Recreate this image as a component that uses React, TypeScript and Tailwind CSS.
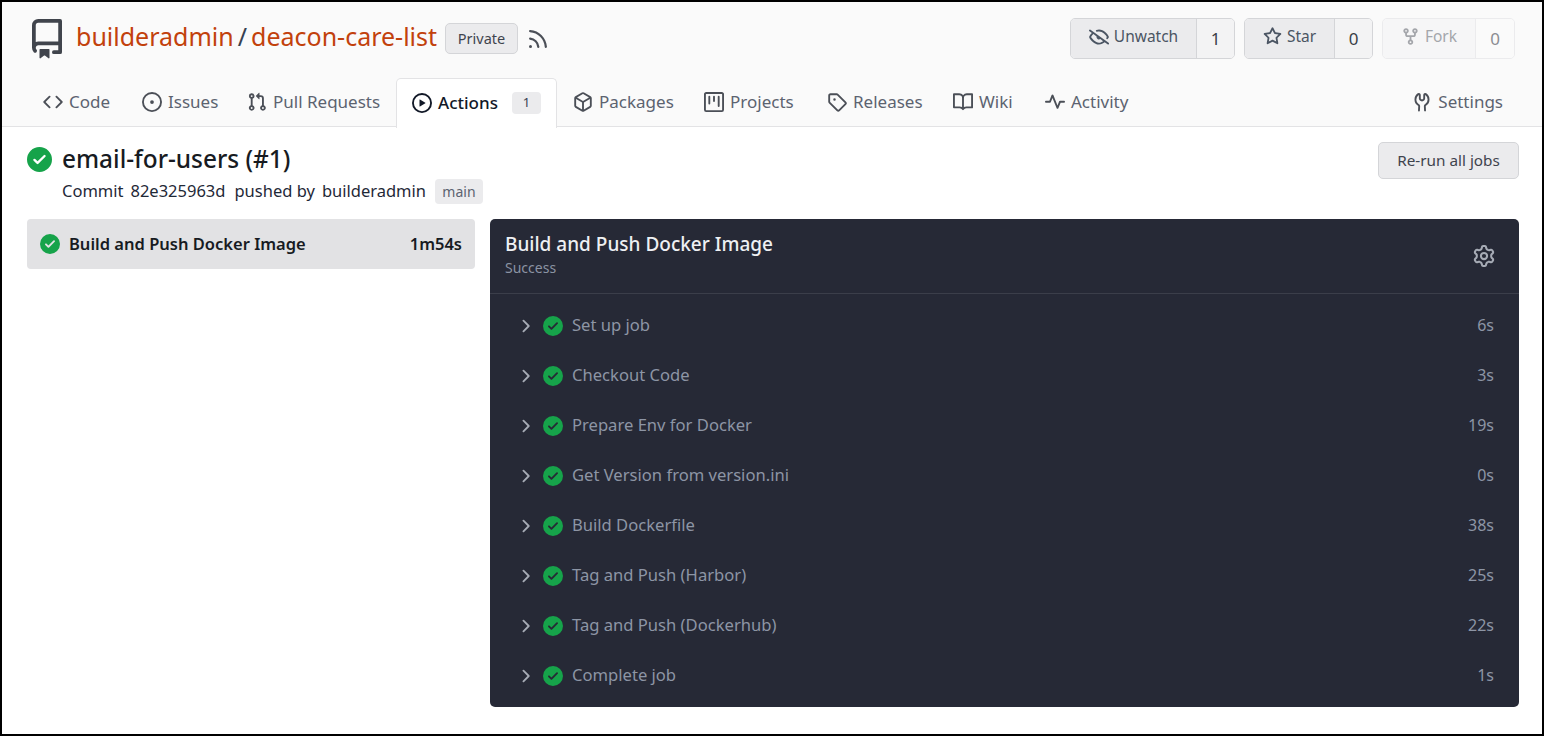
import type { ReactNode } from 'react';

const icons = {
  repo: 'M2 2.5A2.5 2.5 0 0 1 4.5 0h8.75a.75.75 0 0 1 .75.75v12.5a.75.75 0 0 1-.75.75h-2.5a.75.75 0 0 1 0-1.5h1.75v-2h-8a1 1 0 0 0-.714 1.7.75.75 0 1 1-1.072 1.05A2.495 2.495 0 0 1 2 11.5Zm10.5-1h-8a1 1 0 0 0-1 1v6.708A2.486 2.486 0 0 1 4.5 9h8ZM5 12.25a.25.25 0 0 1 .25-.25h3.5a.25.25 0 0 1 .25.25v3.25a.25.25 0 0 1-.4.2l-1.45-1.087a.249.249 0 0 0-.3 0L5.4 15.7a.25.25 0 0 1-.4-.2Z',
  code: 'm11.28 3.22 4.25 4.25a.75.75 0 0 1 0 1.06l-4.25 4.25a.749.749 0 0 1-1.275-.326.749.749 0 0 1 .215-.734L13.94 8l-3.72-3.72a.749.749 0 0 1 .326-1.275.749.749 0 0 1 .734.215Zm-6.56 0a.751.751 0 0 1 1.042.018.751.751 0 0 1 .018 1.042L2.06 8l3.72 3.72a.749.749 0 0 1-.326 1.275.749.749 0 0 1-.734-.215L.47 8.53a.75.75 0 0 1 0-1.06Z',
  issue: 'M8 9.5a1.5 1.5 0 1 0 0-3 1.5 1.5 0 0 0 0 3ZM8 0a8 8 0 1 1 0 16A8 8 0 0 1 8 0ZM1.5 8a6.5 6.5 0 1 0 13 0 6.5 6.5 0 0 0-13 0Z',
  pull: 'M1.5 3.25a2.25 2.25 0 1 1 3 2.122v5.256a2.251 2.251 0 1 1-1.5 0V5.372A2.25 2.25 0 0 1 1.5 3.25Zm5.677-.177L9.573.677A.25.25 0 0 1 10 .854V2.5h1A2.5 2.5 0 0 1 13.5 5v5.628a2.251 2.251 0 1 1-1.5 0V5a1 1 0 0 0-1-1h-1v1.646a.25.25 0 0 1-.427.177L7.177 3.427a.25.25 0 0 1 0-.354ZM3.75 2.5a.75.75 0 1 0 0 1.5.75.75 0 0 0 0-1.5Zm0 9.5a.75.75 0 1 0 0 1.5.75.75 0 0 0 0-1.5Zm8.25.75a.75.75 0 1 0 1.5 0 .75.75 0 0 0-1.5 0Z',
  play: 'M8 0a8 8 0 1 1 0 16A8 8 0 0 1 8 0ZM1.5 8a6.5 6.5 0 1 0 13 0 6.5 6.5 0 0 0-13 0Zm4.879-2.773 4.264 2.559a.25.25 0 0 1 0 .428l-4.264 2.559A.25.25 0 0 1 6 10.559V5.442a.25.25 0 0 1 .379-.215Z',
  pkg: 'm8.878.392 5.25 3.045c.54.314.872.89.872 1.514v6.098a1.75 1.75 0 0 1-.872 1.514l-5.25 3.045a1.75 1.75 0 0 1-1.756 0l-5.25-3.045A1.75 1.75 0 0 1 1 11.049V4.951c0-.624.332-1.201.872-1.514L7.122.392a1.75 1.75 0 0 1 1.756 0ZM7.875 1.69l-4.63 2.685L8 7.133l4.755-2.758-4.63-2.685a.248.248 0 0 0-.25 0ZM2.5 5.677v5.372c0 .09.047.171.125.216l4.625 2.683V8.432Zm6.25 8.271 4.625-2.683a.25.25 0 0 0 .125-.216V5.677L8.75 8.432Z',
  project: 'M1.75 0h12.5C15.216 0 16 .784 16 1.75v12.5A1.75 1.75 0 0 1 14.25 16H1.75A1.75 1.75 0 0 1 0 14.25V1.75C0 .784.784 0 1.75 0ZM1.5 1.75v12.5c0 .138.112.25.25.25h12.5a.25.25 0 0 0 .25-.25V1.75a.25.25 0 0 0-.25-.25H1.75a.25.25 0 0 0-.25.25ZM11.75 3a.75.75 0 0 1 .75.75v7.5a.75.75 0 0 1-1.5 0v-7.5a.75.75 0 0 1 .75-.75Zm-8.25.75a.75.75 0 0 1 1.5 0v5.5a.75.75 0 0 1-1.5 0ZM8 3a.75.75 0 0 1 .75.75v3.5a.75.75 0 0 1-1.5 0v-3.5A.75.75 0 0 1 8 3Z',
  tag: 'M1 7.775V2.75C1 1.784 1.784 1 2.75 1h5.025c.464 0 .91.184 1.238.513l6.25 6.25a1.75 1.75 0 0 1 0 2.474l-5.026 5.026a1.75 1.75 0 0 1-2.474 0l-6.25-6.25A1.752 1.752 0 0 1 1 7.775Zm1.5 0c0 .066.026.13.073.177l6.25 6.25a.25.25 0 0 0 .354 0l5.025-5.025a.25.25 0 0 0 0-.354l-6.25-6.25a.25.25 0 0 0-.177-.073H2.75a.25.25 0 0 0-.25.25ZM6 5a1 1 0 1 1 0 2 1 1 0 0 1 0-2Z',
  book: 'M0 1.75A.75.75 0 0 1 .75 1h4.253c1.227 0 2.317.59 3 1.501A3.743 3.743 0 0 1 11.006 1h4.245a.75.75 0 0 1 .75.75v10.5a.75.75 0 0 1-.75.75h-4.507a2.25 2.25 0 0 0-1.591.659l-.622.621a.75.75 0 0 1-1.06 0l-.622-.621A2.25 2.25 0 0 0 5.258 13H.75a.75.75 0 0 1-.75-.75Zm7.251 10.324.004-5.073-.002-2.253A2.25 2.25 0 0 0 5.003 2.5H1.5v9h3.757a3.75 3.75 0 0 1 1.994.574ZM8.755 4.75l-.004 7.322a3.752 3.752 0 0 1 1.992-.572H14.5v-9h-3.495a2.25 2.25 0 0 0-2.25 2.25Z',
  pulse: 'M6 2c.306 0 .582.187.696.471L10 10.731l1.304-3.26A.751.751 0 0 1 12 7h3.25a.75.75 0 0 1 0 1.5h-2.742l-1.812 4.528a.751.751 0 0 1-1.392 0L6 4.77 4.696 8.03A.75.75 0 0 1 4 8.5H.75a.75.75 0 0 1 0-1.5h2.742l1.812-4.529A.751.751 0 0 1 6 2Z',
  tools: 'M5.433 2.304A4.492 4.492 0 0 0 3.5 6c0 1.598.832 3.002 2.09 3.802.518.328.929.923.902 1.64v.008l-.164 3.337a.75.75 0 1 1-1.498-.073l.163-3.33c.002-.085-.05-.216-.207-.316A5.996 5.996 0 0 1 2 6a5.993 5.993 0 0 1 2.567-4.92 1.482 1.482 0 0 1 1.673-.04c.462.296.76.827.76 1.423v2.82c0 .082.041.16.11.206l.75.51a.25.25 0 0 0 .28 0l.75-.51A.249.249 0 0 0 9 5.282V2.463c0-.596.298-1.127.76-1.423a1.482 1.482 0 0 1 1.673.04A5.993 5.993 0 0 1 14 6a5.996 5.996 0 0 1-2.786 5.068c-.157.1-.209.23-.207.315l.163 3.33a.752.752 0 0 1-1.094.714.75.75 0 0 1-.404-.64l-.164-3.345c-.027-.717.384-1.312.902-1.64A4.495 4.495 0 0 0 12.5 6a4.492 4.492 0 0 0-1.933-3.696c-.024.017-.067.067-.067.16v2.818a1.75 1.75 0 0 1-.767 1.448l-.75.51a1.75 1.75 0 0 1-1.966 0l-.75-.51A1.75 1.75 0 0 1 5.5 5.282V2.463c0-.092-.043-.142-.067-.159Z',
  eyeClosed: 'M.143 2.31a.75.75 0 0 1 1.047-.167l14.5 10.5a.75.75 0 1 1-.88 1.214l-2.248-1.628C11.346 13.19 9.792 14 8 14c-1.981 0-3.67-.992-4.933-2.078C1.797 10.832.88 9.577.43 8.9a1.619 1.619 0 0 1 0-1.797c.353-.533.995-1.42 1.868-2.305L.31 3.357A.75.75 0 0 1 .143 2.31Zm1.536 5.622A.12.12 0 0 0 1.657 8c0 .021.006.045.022.068.412.621 1.242 1.75 2.366 2.717C5.175 11.758 6.527 12.5 8 12.5c1.195 0 2.31-.488 3.29-1.191L9.063 9.695A2 2 0 0 1 6.058 7.52L3.529 5.688a14.207 14.207 0 0 0-1.85 2.244ZM8 3.5c-.516 0-1.017.09-1.499.251a.75.75 0 1 1-.473-1.423A6.207 6.207 0 0 1 8 2c1.981 0 3.67.992 4.933 2.078 1.27 1.091 2.187 2.345 2.637 3.023a1.62 1.62 0 0 1 0 1.798c-.11.166-.248.365-.41.587a.75.75 0 1 1-1.21-.887c.148-.201.272-.382.371-.53a.119.119 0 0 0 0-.137c-.412-.621-1.242-1.75-2.366-2.717C10.825 4.242 9.473 3.5 8 3.5Z',
  star: 'M8 .25a.75.75 0 0 1 .673.418l1.882 3.815 4.21.612a.75.75 0 0 1 .416 1.279l-3.046 2.97.719 4.192a.751.751 0 0 1-1.088.791L8 12.347l-3.766 1.98a.75.75 0 0 1-1.088-.79l.72-4.194L.818 6.374a.75.75 0 0 1 .416-1.28l4.21-.611L7.327.668A.75.75 0 0 1 8 .25Zm0 2.445L6.615 5.5a.75.75 0 0 1-.564.41l-3.097.45 2.24 2.184a.75.75 0 0 1 .216.664l-.528 3.084 2.769-1.456a.75.75 0 0 1 .698 0l2.77 1.456-.53-3.084a.75.75 0 0 1 .216-.664l2.24-2.183-3.096-.45a.75.75 0 0 1-.564-.41L8 2.694Z',
  fork: 'M5 5.372v.878c0 .414.336.75.75.75h4.5a.75.75 0 0 0 .75-.75v-.878a2.25 2.25 0 1 1 1.5 0v.878a2.25 2.25 0 0 1-2.25 2.25h-1.5v2.128a2.251 2.251 0 1 1-1.5 0V8.5h-1.5A2.25 2.25 0 0 1 3.5 6.25v-.878a2.25 2.25 0 1 1 1.5 0ZM5 3.25a.75.75 0 1 0-1.5 0 .75.75 0 0 0 1.5 0Zm6.75.75a.75.75 0 1 0 0-1.5.75.75 0 0 0 0 1.5Zm-3 8.75a.75.75 0 1 0-1.5 0 .75.75 0 0 0 1.5 0Z',
  rss: 'M2.002 2.725a.75.75 0 0 1 .797-.699C8.79 2.42 13.58 7.21 13.974 13.201a.75.75 0 0 1-1.497.098 10.502 10.502 0 0 0-9.776-9.776.747.747 0 0 1-.7-.798ZM2.84 7.05h-.002a7.002 7.002 0 0 1 6.113 6.111.75.75 0 0 1-1.49.178 5.503 5.503 0 0 0-4.8-4.8.75.75 0 0 1 .179-1.489ZM2 13a1 1 0 1 1 2 0 1 1 0 0 1-2 0Z',
  gear: 'M8 0a8.2 8.2 0 0 1 .701.031C9.444.095 9.99.645 10.16 1.29l.288 1.107c.018.066.079.158.212.224.231.114.454.243.668.386.123.082.233.09.299.071l1.103-.303c.644-.176 1.392.021 1.82.63.27.385.506.792.704 1.218.315.675.111 1.422-.364 1.891l-.814.806c-.049.048-.098.147-.088.294.016.257.016.515 0 .772-.01.147.038.246.088.294l.814.806c.475.469.679 1.216.364 1.891a7.977 7.977 0 0 1-.704 1.217c-.428.61-1.176.807-1.82.63l-1.102-.302c-.067-.019-.177-.011-.3.071a5.909 5.909 0 0 1-.668.386c-.133.066-.194.158-.211.224l-.29 1.106c-.168.646-.715 1.196-1.458 1.26a8.006 8.006 0 0 1-1.402 0c-.743-.064-1.289-.614-1.458-1.26l-.289-1.106c-.018-.066-.079-.158-.212-.224a5.738 5.738 0 0 1-.668-.386c-.123-.082-.233-.09-.299-.071l-1.103.303c-.644.176-1.392-.021-1.82-.63a8.12 8.12 0 0 1-.704-1.218c-.315-.675-.111-1.422.363-1.891l.815-.806c.05-.048.098-.147.088-.294a6.214 6.214 0 0 1 0-.772c.01-.147-.038-.246-.088-.294l-.815-.806C.635 6.045.431 5.298.746 4.623a7.92 7.92 0 0 1 .704-1.217c.428-.61 1.176-.807 1.82-.63l1.102.302c.067.019.177.011.3-.071.214-.143.437-.272.668-.386.133-.066.194-.158.211-.224l.29-1.106C6.009.645 6.556.095 7.299.03 7.53.01 7.764 0 8 0Zm-.571 1.525c-.036.003-.108.036-.137.146l-.289 1.105c-.147.561-.549.967-.998 1.189-.173.086-.34.183-.5.29-.417.278-.97.423-1.529.27l-1.103-.303c-.109-.03-.175.016-.195.045-.22.312-.412.644-.573.99-.014.031-.021.11.059.19l.815.806c.411.406.562.957.53 1.456a4.709 4.709 0 0 0 0 .582c.032.499-.119 1.05-.53 1.456l-.815.806c-.081.08-.073.159-.059.19.162.346.353.677.573.989.02.03.085.076.195.046l1.102-.303c.56-.153 1.113-.008 1.53.27.161.107.328.204.501.29.447.222.85.629.997 1.189l.289 1.105c.029.109.101.143.137.146a6.6 6.6 0 0 0 1.142 0c.036-.003.108-.036.137-.146l.289-1.105c.147-.561.549-.967.998-1.189.173-.086.34-.183.5-.29.417-.278.97-.423 1.529-.27l1.103.303c.109.029.175-.016.195-.045.22-.313.411-.644.573-.99.014-.031.021-.11-.059-.19l-.815-.806c-.411-.406-.562-.957-.53-1.456a4.709 4.709 0 0 0 0-.582c-.032-.499.119-1.05.53-1.456l.815-.806c.081-.08.073-.159.059-.19a6.464 6.464 0 0 0-.573-.989c-.02-.03-.085-.076-.195-.046l-1.102.303c-.56.153-1.113.008-1.53-.27a4.44 4.44 0 0 0-.501-.29c-.447-.222-.85-.629-.997-1.189l-.289-1.105c-.029-.11-.101-.143-.137-.146a6.6 6.6 0 0 0-1.142 0ZM11 8a3 3 0 1 1-6 0 3 3 0 0 1 6 0ZM9.5 8a1.5 1.5 0 1 0-3.001.001A1.5 1.5 0 0 0 9.5 8Z',
  check: 'M8 16A8 8 0 1 1 8 0a8 8 0 0 1 0 16Zm3.78-9.72a.751.751 0 0 0-.018-1.042.751.751 0 0 0-1.042-.018L6.75 9.19 5.28 7.72a.751.751 0 0 0-1.042.018.751.751 0 0 0-.018 1.042l2 2a.75.75 0 0 0 1.06 0Z',
  chevron: 'M6.22 3.22a.75.75 0 0 1 1.06 0l4.25 4.25a.75.75 0 0 1 0 1.06l-4.25 4.25a.751.751 0 0 1-1.042-.018.751.751 0 0 1-.018-1.042L9.94 8 6.22 4.28a.75.75 0 0 1 0-1.06Z',
};

type IconName = keyof typeof icons;

function Octicon({ name, className }: { name: IconName; className?: string }) {
  return (
    <svg viewBox="0 0 16 16" fill="currentColor" className={className}>
      <path d={icons[name]} />
    </svg>
  );
}

const tabs: { label: string; icon: IconName; width: string }[] = [
  { label: 'Code', icon: 'code', width: 'w-[99px]' },
  { label: 'Issues', icon: 'issue', width: 'w-[105px]' },
  { label: 'Pull Requests', icon: 'pull', width: 'w-[165px]' },
];

const tabsAfter: { label: string; icon: IconName; width: string }[] = [
  { label: 'Packages', icon: 'pkg', width: 'w-[131px]' },
  { label: 'Projects', icon: 'project', width: 'w-[123px]' },
  { label: 'Releases', icon: 'tag', width: 'w-[126px]' },
  { label: 'Wiki', icon: 'book', width: 'w-[92px]' },
  { label: 'Activity', icon: 'pulse', width: 'w-[117px]' },
];

const steps = [
  ['Set up job', '6s'],
  ['Checkout Code', '3s'],
  ['Prepare Env for Docker', '19s'],
  ['Get Version from version.ini', '0s'],
  ['Build Dockerfile', '38s'],
  ['Tag and Push (Harbor)', '25s'],
  ['Tag and Push (Dockerhub)', '22s'],
  ['Complete job', '1s'],
];

function Tab({ label, icon, width }: { label: string; icon: IconName; width: string }) {
  return (
    <a className={`${width} flex h-[48px] items-center gap-[6px] pb-[3px] pl-4 text-[#5c6370]`}>
      <Octicon name={icon} className="h-[20px] w-[20px] shrink-0 text-[#4b4f57]" />
      <span>{label}</span>
    </a>
  );
}

function CountButton({
  icon,
  label,
  count,
  labelWidth,
  countWidth,
  disabled,
}: {
  icon: ReactNode;
  label: string;
  count: string;
  labelWidth: string;
  countWidth: string;
  disabled?: boolean;
}) {
  return (
    <div
      className={`flex h-[41px] rounded-[5px] border text-[15.5px] ${
        disabled ? 'border-[#ebebed] text-[#a4a6ab]' : 'border-[#d4d5d8] text-[#4b5563]'
      }`}
    >
      <div
        className={`${labelWidth} flex items-center justify-center gap-[5px] rounded-l-[4px] border-r pb-[4px] ${
          disabled ? 'border-[#ebebed] bg-[#f6f6f7]' : 'border-[#d4d5d8] bg-[#ebebed]'
        }`}
      >
        {icon}
        <span>{label}</span>
      </div>
      <div
        className={`${countWidth} flex items-center justify-center rounded-r-[4px] text-[17px] ${
          disabled ? 'bg-[#fafafa] text-[#8b8d92]' : 'bg-[#f3f3f4] text-[#3a3f47]'
        }`}
      >
        {count}
      </div>
    </div>
  );
}

export default function App() {
  return (
    <div className="flex h-[736px] w-[1544px] flex-col overflow-hidden border-2 border-black bg-white font-['Noto_Sans',sans-serif]">
      <header className="h-[125px] shrink-0 border-b border-[#e3e3e5] bg-[#fafafa]">
        <div className="flex h-[75px] items-start pr-[27px] pl-[25px]">
          <Octicon name="repo" className="mt-[17px] h-[40px] w-[40px] shrink-0 text-[#40444c]" />
          <div className="mt-[15px] ml-[9px] flex h-[40px] items-center text-[25px] text-[#c2410c]">
            <span>builderadmin</span>
            <span className="mx-[4px] text-[#374151]">/</span>
            <span>deacon-care-list</span>
          </div>
          <span className="mt-[21px] ml-[8px] flex h-[31px] w-[73px] items-center justify-center rounded-[5px] border border-[#d4d5d8] bg-[#ebebed] text-[14.5px] text-[#3f444d]">
            Private
          </span>
          <Octicon name="rss" className="mt-[25px] ml-[8px] h-[24px] w-[24px] text-[#4b4f57]" />
          <div className="mt-[16px] ml-auto flex gap-[9px]">
            <CountButton
              icon={<Octicon name="eyeClosed" className="h-[20px] w-[20px]" />}
              label="Unwatch"
              count="1"
              labelWidth="w-[126px]"
              countWidth="w-[37px]"
            />
            <CountButton
              icon={<Octicon name="star" className="h-[19px] w-[19px]" />}
              label="Star"
              count="0"
              labelWidth="w-[90px]"
              countWidth="w-[37px]"
            />
            <CountButton
              icon={<Octicon name="fork" className="h-[19px] w-[19px]" />}
              label="Fork"
              count="0"
              labelWidth="w-[93px]"
              countWidth="w-[38px]"
              disabled
            />
          </div>
        </div>
        <nav className="flex h-[50px] items-end px-[25px] text-[17px]">
          {tabs.map((t) => (
            <Tab key={t.label} {...t} />
          ))}
          <a className="relative -mb-px flex h-[50px] w-[161px] items-center gap-[6px] rounded-t-[5px] border-x border-t border-[#e3e3e5] bg-white pb-[1px] pl-[15px] font-medium text-[#111827]">
            <Octicon name="play" className="h-[20px] w-[20px] shrink-0 text-[#111827]" />
            <span>Actions</span>
            <span className="ml-[8px] flex h-[22px] w-[29px] items-center justify-center rounded-[4px] bg-[#ebebed] text-[13px] font-normal text-[#374151]">
              1
            </span>
          </a>
          {tabsAfter.map((t) => (
            <Tab key={t.label} {...t} />
          ))}
          <a className="ml-auto flex h-[48px] items-center gap-[6px] pr-[14px] pb-[3px] text-[#5c6370]">
            <Octicon name="tools" className="h-[20px] w-[20px] text-[#4b4f57]" />
            <span>Settings</span>
          </a>
        </nav>
      </header>

      <main className="flex min-h-0 flex-1 flex-col pr-[23px] pl-[25px]">
        <div className="flex h-[92px] shrink-0 items-start justify-between">
          <div className="flex pt-[19px]">
            <Octicon name="check" className="mt-[1px] h-[25px] w-[25px] text-[#16a34a]" />
            <div className="ml-[10px]">
              <h1 className="text-[24.4px] leading-[26px] font-medium text-[#171b22]">email-for-users (#1)</h1>
              <div className="mt-[7px] flex h-[25px] items-center gap-[7px] text-[16.5px] text-[#1f2937]">
                <span>Commit</span>
                <span>82e325963d</span>
                <span className="ml-[2px]">pushed by</span>
                <span>builderadmin</span>
                <span className="ml-[2px] flex h-[25px] w-[48px] items-center justify-center rounded-[4px] bg-[#ebebed] text-[14px] text-[#5c6370]">
                  main
                </span>
              </div>
            </div>
          </div>
          <button className="mt-[15px] flex h-[37px] w-[141px] items-center justify-center rounded-[5px] border border-[#d4d5d8] bg-[#ebebed] text-[15.3px] text-[#3f444d]">
            Re-run all jobs
          </button>
        </div>

        <div className="flex items-start gap-[15px]">
          <div className="flex h-[50px] w-[448px] shrink-0 items-center rounded-[4px] bg-[#e2e2e4] px-[13px] text-[16.5px] font-semibold text-[#171b22]">
            <Octicon name="check" className="h-[20px] w-[20px] text-[#16a34a]" />
            <span className="ml-[9px]">Build and Push Docker Image</span>
            <span className="ml-auto">1m54s</span>
          </div>

          <section className="h-[488px] flex-1 rounded-[5px] bg-[#262936]">
            <div className="flex h-[75px] items-center justify-between border-b border-[#3b3e4a] pr-[24px] pl-[15px]">
              <div className="-mt-[2px]">
                <div className="text-[19px] leading-[24px] font-medium text-[#eef0f3]">
                  Build and Push Docker Image
                </div>
                <div className="mt-[2px] text-[14px] leading-[20px] text-[#8b93a3]">Success</div>
              </div>
              <Octicon name="gear" className="h-[22px] w-[22px] text-[#a6abb5]" />
            </div>
            <div className="pt-[6px]">
              {steps.map(([name, time]) => (
                <div key={name} className="flex h-[50px] items-center pr-[25px] pl-[25px] text-[#8d95a5]">
                  <Octicon name="chevron" className="mt-[1px] h-[20px] w-[20px] text-[#a6abb5]" />
                  <Octicon name="check" className="mt-[1px] ml-[8px] h-[20px] w-[20px] text-[#16a34a]" />
                  <span className="ml-[9px] text-[16.6px]">{name}</span>
                  <span className="ml-auto text-[16px]">{time}</span>
                </div>
              ))}
            </div>
          </section>
        </div>
      </main>
    </div>
  );
}
